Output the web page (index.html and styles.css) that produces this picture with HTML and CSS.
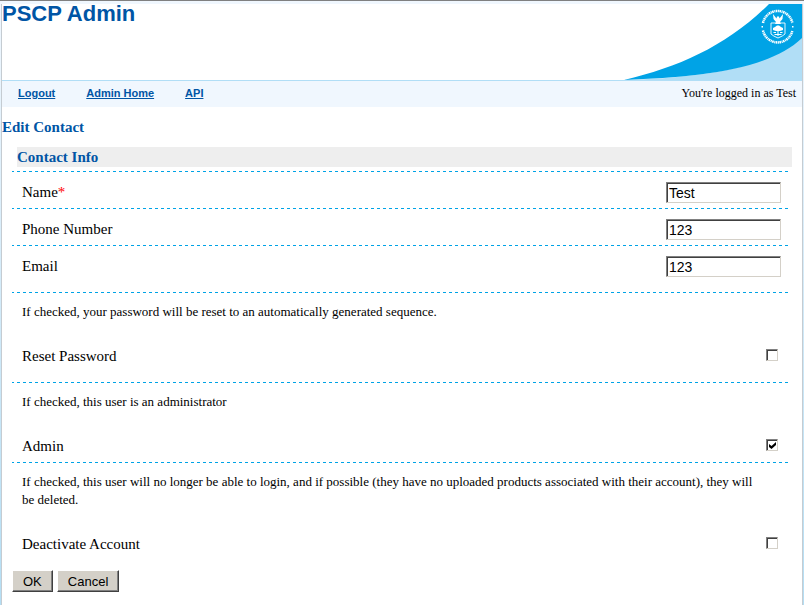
FILE: index.html
```html
<!DOCTYPE html>
<html lang="en">
<head>
<meta charset="utf-8">
<title>PSCP Admin</title>
<link rel="stylesheet" href="styles.css">
</head>
<body>
<div class="page">
  <header class="banner">
    <h1>PSCP Admin</h1>
    <svg class="swoosh" viewBox="0 0 178 76" aria-hidden="true">
      <path fill="#b1def6" d="M0 76C74 74 145 65 178 32V76Z"/>
      <path fill="#00a3e6" d="M0 76C56 63 104 41 145 0H178V34C145 66 74 73 0 76Z"/>
      <g fill="none" stroke="#fff">
        <path stroke-width="2.500" stroke-dasharray="1.600 .6 1 .5" d="M139 19A15 15 0 0 1 168.400 19"/>
        <path stroke-width="2.500" stroke-dasharray="1.600 .6 1 .5" d="M139 26.400A15 15 0 0 0 168.400 26.400"/>
        <path stroke-width=".9" d="M147 19H161V30Q159 32 154 34Q149 32 147 30Z"/>
        <path stroke-width="1" d="M150.500 30.500H157.500M154 24V32M149.500 28.500H152M156 28.500H158.500"/>
      </g>
      <path fill="#fff" d="M149 10L152.500 14.500L153 12.500H155L155.500 14.500L159 10L158.500 15L156 18L157 20H151L152 18L149.500 15ZM151 23L153 21.500H155L157 23L159 24V26L156 27H152L149 26V24ZM137.500 22h1.500v1.500h-1.500ZM168 22h1.500v1.500H168Z"/>
    </svg>
  </header>
  <nav class="menu">
    <a href="#logout">Logout</a>
    <a href="#home">Admin Home</a>
    <a href="#api">API</a>
    <span class="user">You're logged in as Test</span>
  </nav>
  <main>
    <h2>Edit Contact</h2>
    <form class="contact">
      <h3>Contact Info</h3>
      <div class="row"><label for="name">Name<span class="required">*</span></label><input id="name" type="text" value="Test"></div>
      <div class="row"><label for="phone">Phone Number</label><input id="phone" type="text" value="123"></div>
      <div class="row"><label for="email">Email</label><input id="email" type="text" value="123"></div>
      <div class="option spaced">
        <p>If checked, your password will be reset to an automatically generated sequence.</p>
        <div class="choice"><label for="reset">Reset Password</label><input id="reset" type="checkbox"></div>
      </div>
      <div class="option compact">
        <p>If checked, this user is an administrator</p>
        <div class="choice"><label for="admin">Admin</label><input id="admin" type="checkbox" checked></div>
      </div>
      <div class="option">
        <p>If checked, this user will no longer be able to login, and if possible (they have no uploaded products associated with their account), they will be deleted.</p>
        <div class="choice"><label for="deactivate">Deactivate Account</label><input id="deactivate" type="checkbox"></div>
      </div>
      <div class="actions"><button type="button">OK</button><button type="button">Cancel</button></div>
    </form>
  </main>
</div>
</body>
</html>
```
FILE: styles.css
```css
* { box-sizing: border-box; }
body {
  margin: 0;
  min-height: 100vh;
  display: flex;
  border-top: 1px solid #808080;
  background: linear-gradient(#f0f7fe, #b4def4);
  color: #000;
  font: 15px/18px "Liberation Serif", serif;
}
.page {
  flex: 1;
  margin: 3px 1px 0;
  border: solid #c5ccd2;
  border-width: 0 1px;
  background: #fff;
}
h1, h2, h3, p { margin: 0; }
h1, h2, h3 { color: #0055a5; }
.banner {
  display: flex;
  justify-content: space-between;
  align-items: flex-start;
  border-bottom: 1px solid #b1def6;
}
h1 { font: bold 22px/20px "Liberation Sans", sans-serif; }
.swoosh { width: 178px; height: 76px; flex: none; }
.menu {
  display: flex;
  align-items: center;
  gap: 31px;
  height: 26px;
  padding: 0 6px 2px 16px;
  background: #f0f7fe;
}
.menu a {
  color: #0055a5;
  font: bold 11px/22px "Liberation Sans", sans-serif;
}
.user { margin-left: auto; font-size: 12px; }
h2 { margin-top: 10px; font-size: 15px; line-height: 20px; }
.contact { padding: 10px 10px 0; }
h3 {
  margin-left: 5px;
  font-size: 15px;
  line-height: 20px;
  background: #eee;
}
.row, .option {
  margin-right: 2px;
  background: repeating-linear-gradient(90deg, #00a3e6 0 3px, #fff 3px 6px) top / 780px 1px repeat-x;
}
.row {
  display: flex;
  justify-content: space-between;
  align-items: center;
  height: 37px;
  padding: 6px 9px 0 10px;
}
.row label { padding-bottom: 2px; }
h3 + .row { margin-top: 4px; }
input[type="text"] {
  width: 115px;
  height: 21px;
  padding: 1px 2px;
  border: 1px solid;
  border-color: #808080 #d4d0c8 #d4d0c8 #808080;
  border-radius: 0;
  box-shadow: inset 1px 1px #404040;
  background: #fff;
  font: 14px "Liberation Sans", sans-serif;
}
.required { color: #f00; }
.option { padding: 11px 12px 0 10px; }
.spaced { margin-top: 10px; }
.option p { padding-right: 16px; font-size: 13px; }
.choice {
  display: flex;
  justify-content: space-between;
  align-items: center;
  margin-top: 26px;
  padding-bottom: 17px;
}
.compact .choice { padding-bottom: 7px; }
input[type="checkbox"] {
  appearance: none;
  width: 12px;
  height: 12px;
  margin: 0 0 2px;
  border: 1px solid;
  border-color: #808080 #d4d0c8 #d4d0c8 #808080;
  box-shadow: inset 1px 1px #404040;
  background: #fff;
}
input[type="checkbox"]:checked::before {
  content: "";
  display: block;
  width: 7px;
  height: 7px;
  margin: 2px;
  background: #000;
  clip-path: polygon(0 29%, 36% 57%, 100% 0, 100% 43%, 36% 100%, 0 71%);
}
.actions { display: flex; gap: 4px; }
button {
  height: 22px;
  padding: 0 10px;
  border: 1px solid;
  border-color: #fff #404040 #404040 #fff;
  border-radius: 0;
  box-shadow: inset -1px -1px #808080;
  background: #d4d0c8;
  font: 13px "Liberation Sans", sans-serif;
}
```
